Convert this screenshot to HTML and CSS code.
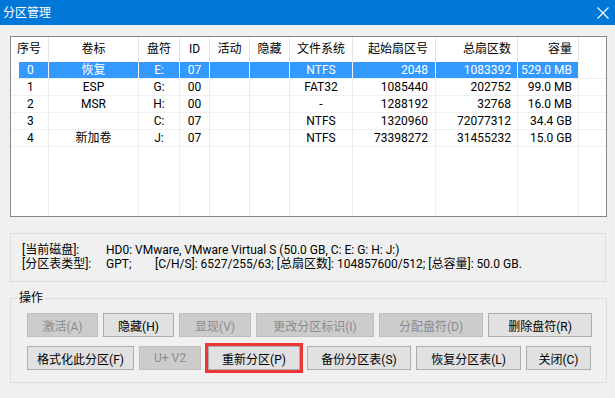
FILE: index.html
```html
<!DOCTYPE html>
<html lang="zh-CN">
<head>
    <meta charset="UTF-8">
    <title>分区管理</title>
    <link rel="stylesheet" href="styles.css">
</head>
<body>
    <div class="titlebar">
        <span class="title">分区管理</span>
        <svg class="close" width="12" height="12" viewBox="0 0 12 12">
            <path d="M0.5 0.5 L11.5 11.5 M11.5 0.5 L0.5 11.5" stroke="#fff" stroke-width="1.1" fill="none"/>
        </svg>
    </div>

    <div class="content">
        <div class="listview">
            <div class="lv-row lv-head">
                <div class="c c-first">序号</div>
                <div class="c">卷标</div>
                <div class="c">盘符</div>
                <div class="c">ID</div>
                <div class="c">活动</div>
                <div class="c">隐藏</div>
                <div class="c">文件系统</div>
                <div class="c c-r c-r7">起始扇区号</div>
                <div class="c c-r">总扇区数</div>
                <div class="c c-r">容量</div>
                <div class="c c-last"></div>
            </div>
            <div class="lv-row selected">
                <div class="c c-first">0</div>
                <div class="c">恢复</div>
                <div class="c">E:</div>
                <div class="c">07</div>
                <div class="c"></div>
                <div class="c"></div>
                <div class="c">NTFS</div>
                <div class="c c-r c-r7">2048</div>
                <div class="c c-r">1083392</div>
                <div class="c c-r">529.0 MB</div>
                <div class="c c-last"></div>
            </div>
            <div class="lv-row">
                <div class="c c-first">1</div>
                <div class="c">ESP</div>
                <div class="c">G:</div>
                <div class="c">00</div>
                <div class="c"></div>
                <div class="c"></div>
                <div class="c">FAT32</div>
                <div class="c c-r c-r7">1085440</div>
                <div class="c c-r">202752</div>
                <div class="c c-r">99.0 MB</div>
                <div class="c c-last"></div>
            </div>
            <div class="lv-row">
                <div class="c c-first">2</div>
                <div class="c">MSR</div>
                <div class="c">H:</div>
                <div class="c">00</div>
                <div class="c"></div>
                <div class="c"></div>
                <div class="c">-</div>
                <div class="c c-r c-r7">1288192</div>
                <div class="c c-r">32768</div>
                <div class="c c-r">16.0 MB</div>
                <div class="c c-last"></div>
            </div>
            <div class="lv-row">
                <div class="c c-first">3</div>
                <div class="c"></div>
                <div class="c">C:</div>
                <div class="c">07</div>
                <div class="c"></div>
                <div class="c"></div>
                <div class="c">NTFS</div>
                <div class="c c-r c-r7">1320960</div>
                <div class="c c-r">72077312</div>
                <div class="c c-r">34.4 GB</div>
                <div class="c c-last"></div>
            </div>
            <div class="lv-row">
                <div class="c c-first">4</div>
                <div class="c">新加卷</div>
                <div class="c">J:</div>
                <div class="c">07</div>
                <div class="c"></div>
                <div class="c"></div>
                <div class="c">NTFS</div>
                <div class="c c-r c-r7">73398272</div>
                <div class="c c-r">31455232</div>
                <div class="c c-r">15.0 GB</div>
                <div class="c c-last"></div>
            </div>
            <div class="lv-row lv-fill">
                <div class="c"></div><div class="c"></div><div class="c"></div>
                <div class="c"></div><div class="c"></div><div class="c"></div>
                <div class="c"></div><div class="c"></div><div class="c"></div>
                <div class="c"></div><div class="c c-last"></div>
            </div>
        </div>

        <div class="infobox">
            <div class="info-line">
                <span class="info-label">[当前磁盘]:</span>
                <span>HD0: VMware, VMware Virtual S (50.0 GB, C: E: G: H: J:)</span>
            </div>
            <div class="info-line">
                <span class="info-label">[分区表类型]:</span>
                <span class="info-type">GPT;</span>
                <span>[C/H/S]: 6527/255/63; [总扇区数]: 104857600/512; [总容量]: 50.0 GB.</span>
            </div>
        </div>

        <fieldset class="ops">
            <legend>操作</legend>
            <div class="btn-row">
                <button class="btn w71" disabled>激活(A)</button>
                <button class="btn w71">隐藏(H)</button>
                <button class="btn w72" disabled>显现(V)</button>
                <button class="btn w118" disabled>更改分区标识(I)</button>
                <button class="btn w104" disabled>分配盘符(D)</button>
                <button class="btn w104">删除盘符(R)</button>
            </div>
            <div class="btn-row">
                <button class="btn w107">格式化此分区(F)</button>
                <button class="btn w62" disabled>U+ V2</button>
                <button class="btn w92 marked">重新分区(P)</button>
                <button class="btn w104">备份分区表(S)</button>
                <button class="btn w105">恢复分区表(L)</button>
                <button class="btn w65">关闭(C)</button>
            </div>
        </fieldset>
    </div>
</body>
</html>
```

FILE: styles.css
```css
body {
    margin: 0;
    background-color: #f0f0f0;
    font-family: Roboto, "Noto Sans CJK SC", sans-serif;
    font-size: 12px;
    color: #000;
}
.titlebar {
    height: 25px;
    background-color: #0078d7;
    color: #fff;
    display: flex;
    align-items: center;
    justify-content: space-between;
    padding: 0 6px 0 3px;
}
.title {
    font-size: 12px;
    line-height: 16px;
}
.content {
    padding: 11px 8px 0 10px;
}
.listview {
    width: 597px;
    height: 181px;
    box-sizing: border-box;
    border: 1px solid #828790;
    background-color: #fff;
    display: flex;
    flex-direction: column;
}
.lv-row {
    display: grid;
    grid-template-columns: 38px 90px 41px 30px 40px 40px 63px 83px 82px 61px 1fr;
    height: 17px;
    line-height: 16px;
}
.lv-head {
    height: 25px;
    line-height: 24px;
}
.lv-fill {
    flex: 1;
}
.c {
    box-sizing: border-box;
    border-right: 1px solid #ececec;
    border-bottom: 1px solid #f0f0f0;
    text-align: center;
    white-space: nowrap;
    overflow: hidden;
}
.lv-head .c {
    border-right-color: #e5e5e5;
    border-bottom: none;
}
.lv-fill .c {
    border-bottom: none;
}
.c-first {
    text-align: left;
    padding-left: 16px;
}
.lv-head .c-first {
    padding-left: 6px;
}
.c-r {
    text-align: right;
    padding-right: 6px;
}
.c-r7 {
    padding-right: 7px;
}
.c-last {
    border-right: none;
}
.selected .c {
    background-color: #3399ff;
    color: #fff;
    border-right-color: #f4f4f4;
}
.selected .c-first {
    background: linear-gradient(to right, #fff 8px, #3399ff 8px);
}
.selected .c-last {
    background: #fff;
}
.infobox {
    margin-top: 16px;
    width: 596px;
    height: 49px;
    box-sizing: border-box;
    border: 1px solid #dcdcdc;
    padding: 9px 0 0 11px;
    line-height: 14px;
}
.info-line {
    white-space: nowrap;
}
.info-label {
    display: inline-block;
    width: 81px;
}
.info-type {
    display: inline-block;
    width: 46px;
}
.ops {
    margin: 8px 0 0 0;
    width: 597px;
    box-sizing: border-box;
    border: 1px solid #dcdcdc;
    padding: 7px 0 12px 16px;
}
.ops legend {
    margin-left: -10px;
    padding: 0 2px;
    line-height: 16px;
}
.btn-row {
    display: flex;
    gap: 5px;
    margin-bottom: 9px;
}
.btn-row:last-child {
    margin-bottom: 0;
}
.btn {
    height: 24px;
    box-sizing: border-box;
    border: 1px solid #adadad;
    background-color: #e1e1e1;
    font-family: inherit;
    font-size: 12px;
    color: #000;
    padding: 0;
    white-space: nowrap;
}
.btn:disabled {
    background-color: #cccccc;
    border-color: #bfbfbf;
    color: #8b8b8b;
}
.marked {
    margin: 0 2px;
    outline: 3px solid #ee3636;
}
.w62 { width: 62px; }
.w65 { width: 65px; }
.w71 { width: 71px; }
.w72 { width: 72px; }
.w92 { width: 92px; }
.w104 { width: 104px; }
.w105 { width: 105px; }
.w107 { width: 107px; }
.w118 { width: 118px; }
```
